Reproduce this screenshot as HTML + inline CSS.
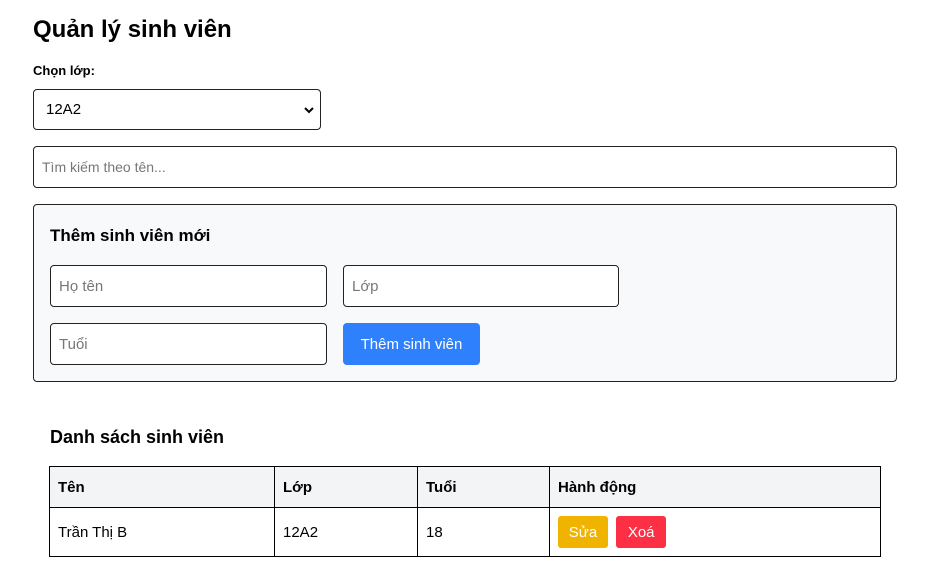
<!DOCTYPE html>
<html><head><meta charset="utf-8"><style>
body{margin:0;width:933px;height:579px;background:#fff;font-family:"Liberation Sans","DejaVu Sans",sans-serif;color:#000;position:relative;overflow:hidden}
.a{position:absolute;box-sizing:border-box}
.inp{border:1px solid #222;border-radius:4px;background:#fff;font-size:15px;color:#777;padding-left:8px;display:flex;align-items:center}
table{border-collapse:collapse;font-size:15px}
td,th{border:1px solid #000;padding:0 8px;text-align:left}
th{background:#f3f4f6;height:40px;font-weight:bold}
td{height:48px}
.btn{display:inline-block;color:#fff;font-size:15px;border-radius:3px;padding:0;width:50px;height:32px;line-height:32px;text-align:center;vertical-align:middle}
</style></head><body>
<div class="a" style="left:33px;top:16px;font-size:24px;font-weight:bold">Quản lý sinh viên</div>
<div class="a" style="left:33px;top:63px;font-size:13px;font-weight:bold">Chọn lớp:</div>
<div class="a inp" style="left:33px;top:89px;width:288px;height:41px;color:#000;padding-left:12px">12A2
<svg style="position:absolute;right:6px;top:16px" width="10" height="8" viewBox="0 0 10 8"><path d="M1 2l4 4 4-4" stroke="#000" stroke-width="2" fill="none"/></svg></div>
<div class="a inp" style="left:33px;top:146px;width:864px;height:42px;font-size:14px">Tìm kiếm theo tên...</div>
<div class="a" style="left:33px;top:204px;width:864px;height:178px;border:1px solid #222;border-radius:4px;background:#f8f9fa"></div>
<div class="a" style="left:50px;top:226px;font-size:17px;font-weight:bold">Thêm sinh viên mới</div>
<div class="a inp" style="left:50px;top:265px;width:277px;height:42px">Họ tên</div>
<div class="a inp" style="left:343px;top:265px;width:276px;height:42px">Lớp</div>
<div class="a inp" style="left:50px;top:323px;width:277px;height:42px">Tuổi</div>
<div class="a" style="left:343px;top:323px;width:137px;height:42px;background:#2f80fd;border-radius:4px;color:#fff;font-size:15px;line-height:44px;text-align:center">Thêm sinh viên</div>
<div class="a" style="left:50px;top:427px;font-size:18px;font-weight:bold">Danh sách sinh viên</div>
<table class="a" style="left:49px;top:466px;width:832px">
<tr><th style="width:208px">Tên</th><th style="width:126px">Lớp</th><th style="width:115px">Tuổi</th><th>Hành động</th></tr>
<tr><td>Trần Thị B</td><td>12A2</td><td>18</td><td><span class="btn" style="background:#f0b400;line-height:34px">Sửa</span> <span class="btn" style="background:#fd2f44;margin-left:4px;line-height:34px">Xoá</span></td></tr>
</table>
</body></html>
